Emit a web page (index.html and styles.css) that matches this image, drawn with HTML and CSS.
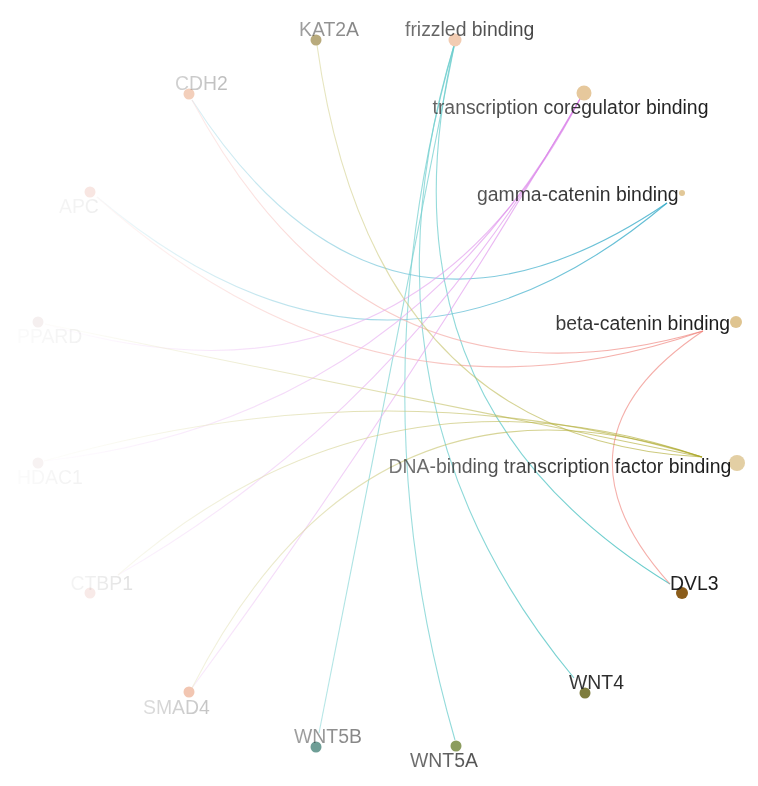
FILE: index.html
```html
<!DOCTYPE html>
<html lang="en">
<head>
<meta charset="utf-8">
<title>Gene-concept network</title>
<link rel="stylesheet" href="styles.css">
</head>
<body>
<main class="canvas">
<svg class="chart" viewBox="0 0 758 786" width="758" height="786" xmlns="http://www.w3.org/2000/svg">
  <defs>
    <linearGradient id="fadeGrad" gradientUnits="userSpaceOnUse" x1="0" y1="0" x2="710" y2="0">
      <stop offset="0" stop-color="#000" stop-opacity="0.01"/>
      <stop offset="0.12" stop-color="#000" stop-opacity="0.06"/>
      <stop offset="0.28" stop-color="#000" stop-opacity="0.24"/>
      <stop offset="0.46" stop-color="#000" stop-opacity="0.48"/>
      <stop offset="0.66" stop-color="#000" stop-opacity="0.74"/>
      <stop offset="0.85" stop-color="#000" stop-opacity="0.92"/>
      <stop offset="1" stop-color="#000" stop-opacity="1"/>
    </linearGradient>
    <mask id="fade" style="mask-type:alpha" maskUnits="userSpaceOnUse" x="0" y="0" width="758" height="786">
      <rect x="0" y="0" width="758" height="786" fill="url(#fadeGrad)"/>
    </mask>
  </defs>

  <g mask="url(#fade)">
    <g class="edges">
      <!-- frizzled binding -->
      <path class="edge e-friz" d="M455 42 L319 733"/>
      <path class="edge e-friz" d="M455 42 Q354.5 393 455 740"/>
      <path class="edge e-friz" d="M455 42 Q345 401.5 574 678"/>
      <path class="edge e-friz" d="M455 42 Q370 399.5 670 584"/>
      <!-- gamma-catenin binding -->
      <path class="edge e-gamma" d="M667 203 Q382 396 192 100"/>
      <path class="edge e-gamma" d="M667 203 Q386 440 97 197"/>
      <!-- beta-catenin binding -->
      <path class="edge e-beta" d="M703 331 Q368 428 192 100"/>
      <path class="edge e-beta" d="M703 331 Q375 445 97 197"/>
      <path class="edge e-beta" d="M703 331 Q540 440 670 584"/>
      <!-- transcription coregulator binding -->
      <path class="edge e-coreg" d="M580 99 Q407.5 432 45 324"/>
      <path class="edge e-coreg" d="M580 99 Q405 420 44 461"/>
      <path class="edge e-coreg" d="M580 99 Q405 410 118 575"/>
      <path class="edge e-coreg" d="M580 99 Q400 405 192 688"/>
      <!-- DNA-binding transcription factor binding -->
      <path class="edge e-dna" d="M702 457 Q372 440 317 45"/>
      <path class="edge e-dna" d="M702 457 Q386 392 45 324"/>
      <path class="edge e-dna" d="M702 457 Q387 363 44 461"/>
      <path class="edge e-dna" d="M702 457 Q377 347.6 118 575"/>
      <path class="edge e-dna" d="M702 457 Q366.5 346.5 192 688"/>
    </g>
  </g>

  <g class="nodes">
    <circle cx="316" cy="40" r="5.5" fill="#b8aa7c"/>
    <circle cx="455" cy="40" r="6.5" fill="#f2ccb2"/>
    <circle cx="584" cy="93" r="7.5" fill="#e6c89c"/>
    <circle cx="682" cy="193" r="3" fill="#e2c898"/>
    <circle cx="736" cy="322" r="6" fill="#dfc490"/>
    <circle cx="737" cy="463" r="8" fill="#e3cfa4"/>
    <circle cx="682" cy="593" r="6" fill="#8b5d1b"/>
    <circle cx="585" cy="693" r="5.5" fill="#7e7d3d"/>
    <circle cx="456" cy="746" r="5.5" fill="#8c9c5e"/>
    <circle cx="316" cy="747" r="5.5" fill="#6e9e96"/>
    <circle cx="189" cy="692" r="5.5" fill="#f2c6b2"/>
    <circle cx="90" cy="593" r="5.5" fill="#f8eae8"/>
    <circle cx="38" cy="463" r="5.5" fill="#f7f2f2"/>
    <circle cx="38" cy="322" r="5.5" fill="#f5efef"/>
    <circle cx="90" cy="192" r="5.5" fill="#f8e6e2"/>
    <circle cx="189" cy="94" r="5.5" fill="#f3cfbb"/>
  </g>

  <g mask="url(#fade)">
    <g class="labels">
      <text class="lbl" x="299" y="35.5">KAT2A</text>
      <text class="lbl" x="405" y="35.5">frizzled binding</text>
      <text class="lbl" x="432.5" y="113.5">transcription coregulator binding</text>
      <text class="lbl" x="477" y="200.5">gamma-catenin binding</text>
      <text class="lbl" x="555.5" y="330">beta-catenin binding</text>
      <text class="lbl" x="388.5" y="472.5">DNA-binding transcription factor binding</text>
      <text class="lbl" x="670" y="589.5">DVL3</text>
      <text class="lbl" x="569" y="688.5">WNT4</text>
      <text class="lbl" x="410" y="766.5">WNT5A</text>
      <text class="lbl" x="294" y="742.5">WNT5B</text>
      <text class="lbl" x="143" y="713.5">SMAD4</text>
      <text class="lbl" x="70.5" y="589.5">CTBP1</text>
      <text class="lbl" x="17" y="483.5">HDAC1</text>
      <text class="lbl" x="17" y="342.5">PPARD</text>
      <text class="lbl" x="59" y="212.5">APC</text>
      <text class="lbl" x="175" y="89.5">CDH2</text>
    </g>
  </g>
</svg>
</main>
</body>
</html>
```

FILE: styles.css
```css
html, body {
  margin: 0;
  padding: 0;
  background: #ffffff;
}

.canvas {
  display: block;
  width: 758px;
  height: 786px;
  overflow: hidden;
}

.chart {
  display: block;
  width: 758px;
  height: 786px;
}

.edge {
  fill: none;
  stroke-width: 1.1;
}

.e-friz {
  stroke: #2fb8b8;
  stroke-opacity: 0.75;
}

.e-gamma {
  stroke: #26a4c4;
  stroke-opacity: 0.75;
}

.e-beta {
  stroke: #ee7d74;
  stroke-opacity: 0.65;
}

.e-coreg {
  stroke: #d673e6;
  stroke-opacity: 0.65;
}

.e-dna {
  stroke: #a8a420;
  stroke-opacity: 0.6;
}

.lbl {
  font-family: "Liberation Sans", Arial, sans-serif;
  font-size: 19.4px;
  fill: #1c1c1c;
}
```
